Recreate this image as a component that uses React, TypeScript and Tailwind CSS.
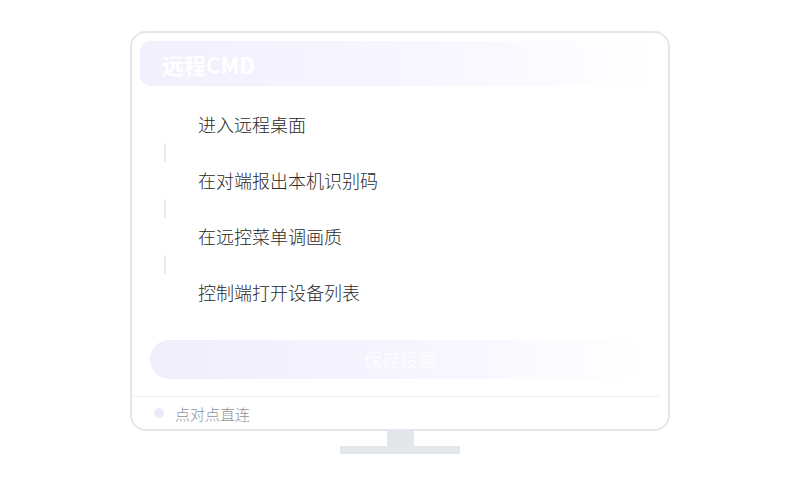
import React from 'react';

const steps = ['进入远程桌面', '在对端报出本机识别码', '在远控菜单调画质', '控制端打开设备列表'];

export default function App() {
  return (
    <div
      className="w-[800px] h-[500px] bg-white flex flex-col items-center pt-[31px]"
      style={{ fontFamily: '"Noto Sans CJK SC", "Noto Sans", sans-serif' }}
    >
      {/* Monitor screen */}
      <div className="w-[540px] h-[400px] rounded-[16px] border-2 border-[#e3e6eb] bg-white flex flex-col overflow-hidden">
        <div className="px-2 pt-2">
          <div className="h-[45px] rounded-[10px] bg-gradient-to-r from-[#f3f0fe] via-[#f7f5ff] to-white flex items-center px-[22px]">
            <span className="text-white text-[22px] font-bold leading-none">远程CMD</span>
          </div>
        </div>

        {/* Steps */}
        <div className="flex flex-col pt-[24px] pl-[66px]">
          {steps.map((s, i) => (
            <div key={s} className="flex flex-col">
              <div className="h-[28px] flex items-center text-[18px] font-light text-[#2a2a2a] leading-none">{s}</div>
              {i < steps.length - 1 && (
                <div className="h-[28px] flex items-center -ml-[34px]">
                  <div className="w-[2px] h-[19px] bg-[#e6e8ec] rounded-full" />
                </div>
              )}
            </div>
          ))}
        </div>

        <div className="px-[18px] pt-[34px]">
          <button className="w-full h-[39px] rounded-full bg-gradient-to-r from-[#f1eefd] via-[#f6f4fe] to-white text-white text-[18px] font-light flex items-center justify-center">
            保存设置
          </button>
        </div>

        <div className="mt-[17px] mr-2 border-t border-[#eef0f3]" />
        <div className="flex items-center gap-[11px] pl-[22px] h-[32px]">
          <div className="w-[10px] h-[10px] rounded-full bg-[#ece9fb]" />
          <span className="text-[15px] font-light text-[#8f939b] leading-none">点对点直连</span>
        </div>
      </div>

      {/* Stand */}
      <div className="w-[27px] h-[15px] bg-[#e3e6eb]" />
      <div className="w-[120px] h-[8px] bg-[#e3e6eb]" />
    </div>
  );
}
